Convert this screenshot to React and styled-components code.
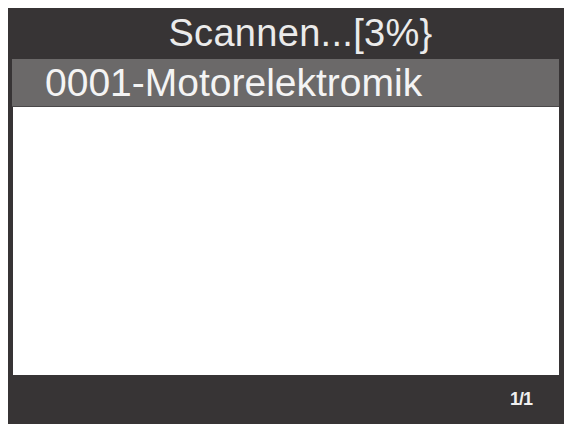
import styled, { createGlobalStyle } from "styled-components";

const GlobalStyle = createGlobalStyle`
  html, body {
    margin: 0;
    padding: 0;
    background: #ffffff;
  }
  body {
    font-family: "Liberation Sans", Arial, sans-serif;
  }
`;

const Screen = styled.div`
  margin: 8px 0 0 8px;
  width: 556px;
  height: 416px;
  box-sizing: border-box;
  padding: 0 5px 0 4px;
  background: #373435;
  display: flex;
  flex-direction: column;
`;

const Header = styled.div`
  height: 51px;
  flex: none;
  display: flex;
  align-items: center;
  justify-content: center;
  padding-left: 30px;
  color: #ebebeb;
  font-size: 38px;
  letter-spacing: 0.3px;
`;

const Row = styled.div`
  height: 47px;
  flex: none;
  display: flex;
  align-items: center;
  padding-left: 33px;
  background: ${(p) => (p.selected ? "#6b6969" : "#ffffff")};
  color: ${(p) => (p.selected ? "#f4f4f4" : "#222")};
  font-size: 39px;
  border-bottom: 1px solid #4a4849;
`;

const List = styled.div`
  flex: 1;
  background: #ffffff;
  margin-left: 1px;
`;

const Footer = styled.div`
  height: 49px;
  flex: none;
  display: flex;
  align-items: center;
  justify-content: flex-end;
  padding-right: 27px;
  color: #f0f0f0;
  font-size: 18px;
  font-weight: bold;
  letter-spacing: -1px;
`;

export default function App() {
  return (
    <>
      <GlobalStyle />
      <Screen>
        <Header>Scannen...[3%}</Header>
        <Row selected>0001-Motorelektromik</Row>
        <List />
        <Footer>1/1</Footer>
      </Screen>
    </>
  );
}
